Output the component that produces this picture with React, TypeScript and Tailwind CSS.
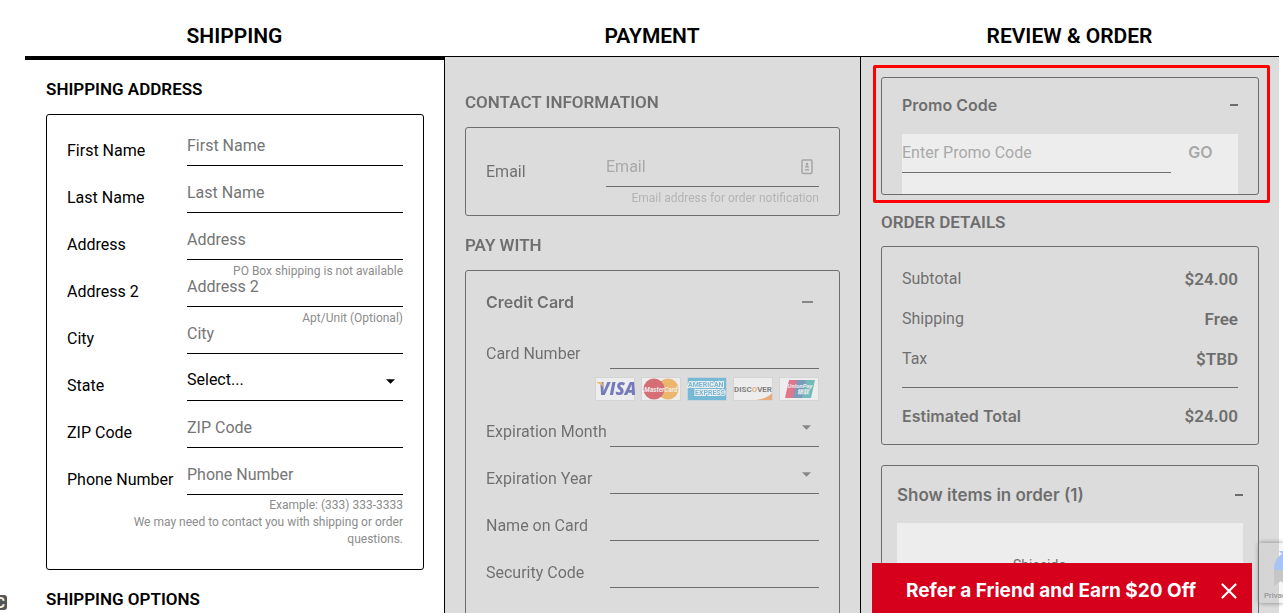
import type { ReactNode } from "react";
import { X } from "lucide-react";

type RowProps = {
  id: string;
  label: string;
  labelClass: string;
  children: ReactNode;
};

const Row = ({ id, label, labelClass, children }: RowProps) => (
  <div className="relative flex h-[47px] items-end">
    <label
      htmlFor={id}
      className={`h-[30px] shrink-0 whitespace-nowrap leading-[30px] ${labelClass}`}
    >
      {label}
    </label>
    {children}
  </div>
);

const inputClass =
  "h-[41px] w-full min-w-0 flex-1 border-b border-black bg-transparent outline-none placeholder:text-[#757575]";

const headingClass = "text-[17px] leading-[22px] font-semibold";

const toggleClass =
  "flex w-full items-center justify-between font-[Inter,sans-serif] leading-6 font-semibold";

const Caret = ({ className }: { className: string }) => (
  <svg
    viewBox="0 0 10 5"
    className={`pointer-events-none absolute h-[5px] w-[9px] ${className}`}
  >
    <path d="M0 0h10L5 5z" fill="currentColor" />
  </svg>
);

const shippingFields = [
  { id: "first-name", label: "First Name" },
  { id: "last-name", label: "Last Name" },
  { id: "address", label: "Address", hint: "PO Box shipping is not available" },
  { id: "address-2", label: "Address 2", hint: "Apt/Unit (Optional)" },
  { id: "city", label: "City" },
  { id: "state", label: "State", select: true },
  { id: "zip", label: "ZIP Code" },
  { id: "phone", label: "Phone Number" },
];

const Shipping = () => (
  <section className="pt-[18px] pr-5 pl-[21px]">
    <h3 className={headingClass}>SHIPPING ADDRESS</h3>
    <div className="mt-3.5 rounded-[3px] border border-black px-5 pt-1 pb-5">
      {shippingFields.map(({ id, label, hint, select }) => (
        <Row key={id} id={id} label={label} labelClass="w-[120px]">
          {select ? (
            <>
              <select id={id} className={`${inputClass} appearance-none`}>
                <option>Select...</option>
              </select>
              <Caret className="right-2 bottom-[17px]" />
            </>
          ) : (
            <input id={id} placeholder={label} className={inputClass} />
          )}
          {hint && (
            <p className="absolute top-full right-0 mt-0.5 text-xs leading-[18px] text-[#8c8c8c]">
              {hint}
            </p>
          )}
        </Row>
      ))}
      <p className="pt-0.5 pb-px pl-8 text-right text-xs leading-[17px] text-[#8c8c8c]">
        Example: (333) 333-3333
        <br />
        We may need to contact you with shipping or order questions.
      </p>
    </div>
    <h3 className={`mt-[18px] ${headingClass}`}>SHIPPING OPTIONS</h3>
  </section>
);

const CardLogos = () => (
  <div className="mt-2 -mb-px flex justify-end gap-1.5">
    <svg viewBox="0 0 40 24" className="h-6 w-10" role="img" aria-label="Visa">
      <rect x=".5" y=".5" width="39" height="23" fill="#fff" stroke="#ccc" />
      <text x="4" y="18" fontSize="17" fontWeight="800" fontStyle="italic" fontFamily="Open Sans, sans-serif" fill="#10189a">
        VISA
      </text>
      <path d="M2 5h5l2 7c-1-3-3-5-7-6z" fill="#f5a000" />
    </svg>
    <svg viewBox="0 0 40 24" className="h-6 w-10" role="img" aria-label="MasterCard">
      <rect x=".5" y=".5" width="39" height="23" fill="#fff" stroke="#ccc" />
      <circle cx="27" cy="12" r="10.5" fill="#ff9100" />
      <circle cx="13" cy="12" r="10.5" fill="#d00010" />
      <text x="20" y="14.5" textAnchor="middle" fontSize="6.5" fontWeight="700" fontStyle="italic" fontFamily="Roboto, sans-serif" fill="#fff">
        MasterCard
      </text>
    </svg>
    <svg viewBox="0 0 40 24" className="h-6 w-10" role="img" aria-label="American Express">
      <rect x=".5" y=".5" width="39" height="23" fill="#1196d2" stroke="#b5cbd6" />
      <g fontSize="7" fontWeight="700" fontFamily="Roboto, sans-serif" fill="#1590c8" stroke="#fff" strokeWidth="2" paintOrder="stroke">
        <text x="1" y="10">AMERICAN</text>
        <text x="8" y="18">EXPRESS</text>
      </g>
    </svg>
    <svg viewBox="0 0 40 24" className="h-6 w-10" role="img" aria-label="Discover">
      <rect x=".5" y=".5" width="39" height="23" fill="#fff" stroke="#ccc" />
      <path d="M23 23c7-1 12-3 16-7v7z" fill="#f57a1c" />
      <text x="20" y="14.5" textAnchor="middle" fontSize="8" fontWeight="700" fontFamily="Roboto, sans-serif" fill="#222">
        DISC<tspan fill="#f57a1c">O</tspan>VER
      </text>
    </svg>
    <svg viewBox="0 0 40 24" className="h-6 w-10" role="img" aria-label="UnionPay">
      <rect x=".5" y=".5" width="39" height="23" fill="#fff" stroke="#ccc" />
      <path d="M10 3h9l-4 18H6z" fill="#e5103c" />
      <path d="M18 3h10l-4 18H14z" fill="#1a5a9a" />
      <path d="M27 3h9l-4 18h-9z" fill="#0a9a98" />
      <g fontSize="6" fontWeight="700" fontStyle="italic" fill="#fff" textAnchor="middle">
        <text x="21" y="11" fontFamily="Roboto, sans-serif">UnionPay</text>
        <text x="24" y="17" fontFamily="Noto Sans CJK SC, sans-serif">银联</text>
      </g>
    </svg>
  </div>
);

const Payment = () => (
  <section className="px-5 pt-[34px] opacity-50">
    <h3 className={headingClass}>CONTACT INFORMATION</h3>
    <div className="mt-3.5 rounded-[3px] border border-black px-5 pt-3 pb-2">
      <Row id="email" label="Email" labelClass="w-[120px]">
        <input id="email" type="email" placeholder="Email" className={inputClass} />
        <svg
          viewBox="0 0 12 16"
          className="pointer-events-none absolute right-1.5 bottom-3 h-4 w-3 text-[#707070]"
        >
          <rect x="1" y="1" width="10" height="13.5" rx="1" fill="none" stroke="currentColor" strokeWidth="1.5" />
          <circle cx="6" cy="5" r="1.3" fill="currentColor" />
          <path d="M4 8.5V8l1-1.5h2L8 8v.5zM4 10h4v1.5H4z" fill="currentColor" />
        </svg>
      </Row>
      <p className="pt-0.5 text-right text-xs leading-[18px] text-[#8c8c8c]">
        Email address for order notification
      </p>
    </div>
    <h3 className={`mt-[18px] ${headingClass}`}>PAY WITH</h3>
    <div className="mt-3.5 h-[400px] rounded-[3px] border border-black px-5 pt-[19px]">
      <button type="button" className={`pr-1.5 ${toggleClass}`}>
        Credit Card
        <span className="h-0.5 w-[11px] bg-[#333]" />
      </button>
      <div className="pt-2">
        <Row id="card-number" label="Card Number" labelClass="w-[124px]">
          <input id="card-number" className={inputClass} />
        </Row>
        <CardLogos />
      </div>
      <Row id="exp-month" label="Expiration Month" labelClass="w-[124px]">
        <select id="exp-month" className={`${inputClass} appearance-none border-[#444]`} />
        <Caret className="right-2 bottom-[17px] text-[#333]" />
      </Row>
      <Row id="exp-year" label="Expiration Year" labelClass="w-[124px]">
        <select id="exp-year" className={`${inputClass} appearance-none border-[#444]`} />
        <Caret className="right-2 bottom-[17px] text-[#333]" />
      </Row>
      <Row id="card-name" label="Name on Card" labelClass="w-[124px]">
        <input id="card-name" className={inputClass} />
      </Row>
      <Row id="cvv" label="Security Code" labelClass="w-[124px]">
        <input id="cvv" className={inputClass} />
      </Row>
    </div>
  </section>
);

const totals = [
  { label: "Subtotal", value: "$24.00" },
  { label: "Shipping", value: "Free" },
  { label: "Tax", value: "$TBD" },
];

const Review = () => (
  <section className="px-5 pt-5">
    <div className="relative">
      <div className="rounded-[3px] border border-black px-5 pt-[15px] opacity-50">
        <button type="button" className={toggleClass}>
          Promo Code
          <span className="h-0.5 w-2 bg-black" />
        </button>
        <form className="mt-[17px] flex h-[60px] items-start bg-white">
          <input
            aria-label="Enter Promo Code"
            placeholder="Enter Promo Code"
            className="h-[39px] min-w-0 flex-1 border-b border-black pb-0.5 outline-none placeholder:text-[#757575]"
          />
          <button
            type="button"
            className="w-[67px] pr-2 font-[Inter,sans-serif] leading-9 font-semibold text-[#757575]"
          >
            GO
          </button>
        </form>
      </div>
      {/* highlight frame around the promo box */}
      <div className="pointer-events-none absolute -top-3 -right-[11px] -bottom-2 -left-2 rounded-[2px] border-[3px] border-[#fe0000]" />
    </div>
    <div className="opacity-50">
      <h3 className={`mt-4 ${headingClass}`}>ORDER DETAILS</h3>
      <div className="mt-[13px] rounded-[3px] border border-black px-5 pt-3 pb-2">
        <dl>
          {totals.map(({ label, value }) => (
            <div key={label} className="flex justify-between leading-10">
              <dt>{label}</dt>
              <dd className="text-[17px] font-semibold">{value}</dd>
            </div>
          ))}
          <div className="mt-2 flex justify-between border-t border-black pt-2 leading-10 font-semibold">
            <dt className="font-[Inter,sans-serif]">Estimated Total</dt>
            <dd className="text-[17px]">$24.00</dd>
          </div>
        </dl>
      </div>
      <div className="mt-5 rounded-[3px] border border-black px-[15px] pt-[17px]">
        <button type="button" className={`text-[17px] ${toggleClass}`}>
          Show items in order (1)
          <span className="h-0.5 w-2 bg-black" />
        </button>
        <div className="mt-4 h-[180px] bg-white pt-8 pl-[116px] text-sm">
          Shiseido
        </div>
      </div>
    </div>
  </section>
);

const tabClass = "pt-[23px] text-center text-[21px] leading-[26px] font-semibold";

const App = () => {
  return (
    <main className="relative h-screen overflow-hidden bg-white font-[Roboto,sans-serif] text-base text-black">
      <div className="mr-1 ml-[25px] grid h-full grid-cols-[419fr_416fr_419fr] grid-rows-[56px_1fr]">
        <h2 className={tabClass}>SHIPPING</h2>
        <h2 className={tabClass}>PAYMENT</h2>
        <h2 className={tabClass}>REVIEW &amp; ORDER</h2>
        <div className="min-h-0 border-t-4 border-black">
          <Shipping />
        </div>
        <div className="min-h-0 border-t border-l border-black bg-[#dcdcdc]">
          <Payment />
        </div>
        <div className="min-h-0 border-t border-l border-black bg-[#dcdcdc]">
          <Review />
        </div>
      </div>

      <aside className="absolute bottom-0 left-0 h-[18px] w-[7px] overflow-hidden">
        <div className="flex h-[15px] w-5 -translate-x-[13px] items-center justify-end rounded-[3px] bg-[#555] pr-0.5 text-sm font-bold text-[#f5f5e8]">
          C
        </div>
      </aside>

      <aside className="absolute right-0 bottom-2.5 h-[60px] w-6 overflow-hidden rounded-l-[2px] bg-black/3 shadow-[0_0_5px_#808080]">
        <svg viewBox="0 0 24 60" className="h-full w-full">
          <path d="M15 27c0-8 3-13 8-16l-3-3h12v19z" fill="#a8c3f5" />
          <path d="M15 27h17v16h-5l-5-5-7 5z" fill="#c6c6c6" />
          <text x="5" y="55" fontSize="8" fontFamily="Roboto, sans-serif" fill="#888">
            Privacy
          </text>
        </svg>
      </aside>

      <aside className="absolute right-[31px] bottom-0 flex h-[50px] w-[380px] items-center justify-between bg-[#d6001c] pt-1.5 pr-2.5 pl-[34px] text-white">
        <a
          href="#refer"
          className="font-[Inter,sans-serif] text-[19px] font-bold whitespace-nowrap"
        >
          Refer a Friend and Earn $20 Off
        </a>
        <button type="button" aria-label="Close">
          <X size={26} strokeWidth={2} />
        </button>
      </aside>
    </main>
  );
};

export default App;
